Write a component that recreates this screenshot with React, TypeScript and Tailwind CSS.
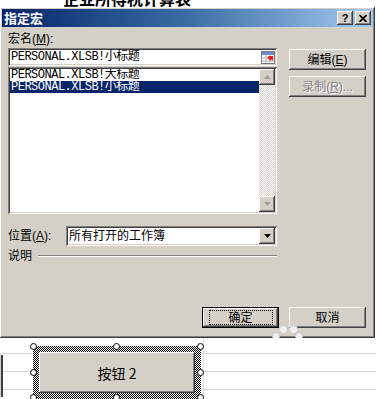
import React from "react";

const raised =
  "shadow-[inset_-1px_-1px_#404040,inset_1px_1px_#ffffff,inset_-2px_-2px_#808080,inset_2px_2px_#d4d0c8]";
const sunken =
  "shadow-[inset_1px_1px_#808080,inset_-1px_-1px_#ffffff,inset_2px_2px_#404040,inset_-2px_-2px_#d4d0c8]";
const checker = "bg-[repeating-conic-gradient(#d4d0c8_0%_25%,#ffffff_0%_50%)] bg-[length:2px_2px]";
const dots = "bg-[repeating-conic-gradient(#000000_0%_25%,#ffffff_0%_50%)] bg-[length:2px_2px]";

function Btn({ children, disabled, def }: { children: React.ReactNode; disabled?: boolean; def?: boolean }) {
  return (
    <div
      className={`flex items-center justify-center w-[77px] h-[21px] bg-[#d4d0c8] ${
        def ? "border border-black shadow-[inset_-1px_-1px_#404040,inset_1px_1px_#ffffff,inset_-2px_-2px_#808080]" : raised
      }`}
    >
      {def ? (
        <span className="flex items-center justify-center w-[64px] h-[15px] border border-dotted border-black">{children}</span>
      ) : (
        <span className={disabled ? "text-[#808080] [text-shadow:1px_1px_#ffffff]" : ""}>{children}</span>
      )}
    </div>
  );
}

function Arrow({ up, grey }: { up?: boolean; grey?: boolean }) {
  return (
    <svg width="7" height="4" viewBox="0 0 7 4">
      <path d={up ? "M3.5 0 L7 4 L0 4 Z" : "M0 0 L7 0 L3.5 4 Z"} fill={grey ? "#a0a0a0" : "#000"} />
    </svg>
  );
}

function RefIcon() {
  return (
    <svg width="14" height="13" viewBox="0 0 14 13">
      <rect x="0.5" y="0.5" width="13" height="12" fill="#fff" stroke="#7a7a7a" />
      <rect x="1" y="1" width="12" height="3" fill="#6a8cc8" />
      <path d="M1 7 H13 M1 10 H13 M5 4 V12 M9 4 V12" stroke="#b0b0b0" strokeWidth="1" />
      <path d="M7 5 L12 5 L12 10 Z" fill="#e02020" />
      <path d="M7 6 L10 9" stroke="#e02020" strokeWidth="2" />
    </svg>
  );
}

export default function App() {
  return (
    <div className="w-[376px] h-[399px] overflow-hidden bg-white text-[12px] leading-[14px] text-black font-['Liberation_Sans','Noto_Sans_CJK_SC',sans-serif]">
      {/* cut-off sheet title above the dialog */}
      <div className="h-[7px] overflow-hidden">
        <div className="-mt-[10px] ml-[63px] text-[16px] leading-[16px] font-bold font-['Noto_Sans_CJK_SC',sans-serif]">
          企业所得税计算表
        </div>
      </div>

      {/* dialog */}
      <div className={`relative w-[375px] h-[331px] bg-[#d4d0c8] p-[2px] flex flex-col ${raised}`}>
        <div className="h-[18px] bg-gradient-to-r from-[#0a246a] via-[#3a6ea5] to-[#a6caf0] flex items-center justify-between pl-[2px] pr-[2px]">
          <span className="text-white font-bold text-[13px] font-['Noto_Sans_CJK_SC',sans-serif]">指定宏</span>
          <div className="flex gap-[2px]">
            <div className={`w-[16px] h-[14px] bg-[#d4d0c8] flex items-center justify-center font-bold text-[11px] leading-[11px] ${raised}`}>
              ?
            </div>
            <div className={`w-[16px] h-[14px] bg-[#d4d0c8] flex items-center justify-center ${raised}`}>
              <svg width="8" height="7" viewBox="0 0 8 7">
                <path d="M0.5 0 L7.5 7 M7.5 0 L0.5 7" stroke="#000" strokeWidth="1.6" />
              </svg>
            </div>
          </div>
        </div>

        <div className="flex pl-[6px] pt-[5px]">
          {/* left column */}
          <div className="w-[269px] flex flex-col">
            <div className="h-[15px]">
              宏名(<u>M</u>):
            </div>
            <div className={`mt-[1px] h-[18px] bg-white flex items-center justify-between pl-[3px] pr-[2px] ${sunken}`}>
              <span className="font-['Liberation_Mono','Noto_Sans_CJK_SC',monospace] tracking-[-0.5px]">PERSONAL.XLSB!小标题</span>
              <RefIcon />
            </div>
            <div className={`mt-[1px] h-[147px] bg-white flex p-[2px] ${sunken}`}>
              <div className="flex-1 flex flex-col font-['Liberation_Mono','Noto_Sans_CJK_SC',monospace] tracking-[-0.5px] text-[12px]">
                <div className="h-[12px] pl-[1px] flex items-center overflow-hidden">
                  <span className="leading-[12px]">PERSONAL.XLSB!大标题</span>
                </div>
                <div className="h-[12px] pl-[1px] bg-[#0a246a] text-white flex items-center overflow-hidden">
                  <span className="leading-[12px]">PERSONAL.XLSB!小标题</span>
                </div>
              </div>
              <div className={`w-[16px] flex flex-col justify-between ${checker}`}>
                <div className={`h-[16px] bg-[#d4d0c8] flex items-center justify-center ${raised}`}>
                  <Arrow up grey />
                </div>
                <div className={`h-[16px] bg-[#d4d0c8] flex items-center justify-center ${raised}`}>
                  <Arrow grey />
                </div>
              </div>
            </div>
          </div>

          {/* right column */}
          <div className="ml-[12px] pt-[17px] flex flex-col gap-[6px]">
            <Btn>
              编辑(<u>E</u>)
            </Btn>
            <Btn disabled>
              录制(<u>R</u>)...
            </Btn>
          </div>
        </div>

        <div className="flex items-center pl-[6px] mt-[12px] w-[275px]">
          <span className="w-[58px]">
            位置(<u>A</u>):
          </span>
          <div className={`flex-1 h-[20px] bg-white flex items-center justify-between pl-[3px] pr-[2px] ${sunken}`}>
            <span className="text-[12px]">所有打开的工作簿</span>
            <div className={`w-[16px] h-[16px] bg-[#d4d0c8] flex items-center justify-center ${raised}`}>
              <Arrow />
            </div>
          </div>
        </div>

        <div className="flex items-center pl-[6px] mt-[3px] w-[275px] h-[14px]">
          <span>说明</span>
          <div className="flex-1 ml-[6px] h-[2px] border-t border-[#808080] border-b-white border-b" />
        </div>

        <div className="flex justify-end gap-[10px] pr-[7px] mt-auto mb-[8px]">
          <Btn def>确定</Btn>
          <Btn>取消</Btn>
        </div>

        {/* faint watermark blobs */}
        <div className="absolute left-[272px] top-[325px] w-[8px] h-[8px] rounded-full bg-[#eeeeee] border border-[#c8c8c8]" />
        <div className="absolute left-[279px] top-[318px] w-[9px] h-[9px] rounded-full bg-[#f2f2f2] border border-[#c8c8c8]" />
        <div className="absolute left-[289px] top-[318px] w-[9px] h-[9px] rounded-full bg-[#f2f2f2] border border-[#c8c8c8]" />
        <div className="absolute left-[295px] top-[325px] w-[8px] h-[8px] rounded-full bg-[#eeeeee] border border-[#c8c8c8]" />
      </div>

      {/* sheet below */}
      <div className="relative h-[61px] bg-white">
        <div className="flex flex-col">
          <div className="h-[16px] flex border-b border-[#d8d8d8]">
            <div className="w-[204px] border-r border-[#e0e0e0]" />
          </div>
          <div className="h-[18px] flex border-b border-[#d8d8d8]">
            <div className="w-[204px] border-r border-[#e0e0e0]" />
          </div>
          <div className="h-[18px] flex border-b border-[#d8d8d8]">
            <div className="w-[204px] border-r border-[#e0e0e0]" />
          </div>
          <div className="h-[9px] flex">
            <div className="w-[204px] border-r border-[#e0e0e0]" />
          </div>
        </div>

        {/* neighbouring object at left edge */}
        <div className="absolute left-0 top-[17px] w-[3px] h-[42px] bg-[#d4d0c8] border-r-2 border-[#404040]" />

        {/* selected button */}
        <div className={`absolute left-[33px] top-[8px] w-[168px] h-[53px] p-[6px] ${dots}`}>
          <div className={`w-full h-[41px] bg-[#d4d0c8] flex items-center justify-center text-[14px] font-['Noto_Sans_CJK_SC',sans-serif] ${raised}`}>
            按钮 2
          </div>
          <div className="absolute -left-[3px] -top-[3px] w-[7px] h-[7px] rounded-full bg-white border border-black" />
          <div className="absolute left-[80px] -top-[3px] w-[7px] h-[7px] rounded-full bg-white border border-black" />
          <div className="absolute -right-[3px] -top-[3px] w-[7px] h-[7px] rounded-full bg-white border border-black" />
          <div className="absolute -left-[3px] top-[23px] w-[7px] h-[7px] rounded-full bg-white border border-black" />
          <div className="absolute -right-[3px] top-[23px] w-[7px] h-[7px] rounded-full bg-white border border-black" />
          <div className="absolute -left-[3px] top-[48px] w-[7px] h-[7px] rounded-full bg-white border border-black" />
          <div className="absolute left-[80px] top-[48px] w-[7px] h-[7px] rounded-full bg-white border border-black" />
          <div className="absolute -right-[3px] top-[48px] w-[7px] h-[7px] rounded-full bg-white border border-black" />
        </div>
      </div>
    </div>
  );
}
